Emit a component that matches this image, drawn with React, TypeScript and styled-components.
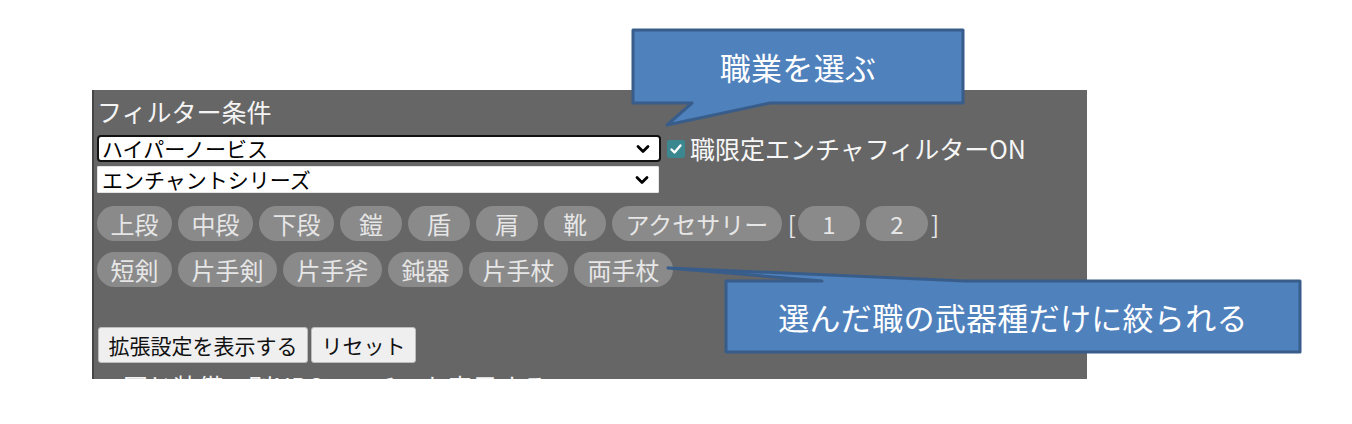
import styled, { createGlobalStyle } from "styled-components";

const GlobalStyle = createGlobalStyle`
  html, body {
    margin: 0;
    padding: 0;
    background: #fff;
  }
  body {
    font-family: "Noto Sans CJK JP", "Noto Sans", sans-serif;
  }
`;

const Page = styled.div`
  position: relative;
  width: 1352px;
  height: 424px;
  box-sizing: border-box;
  padding: 90px 0 0 92px;
  overflow: hidden;
`;

const Panel = styled.section`
  width: 995px;
  height: 289px;
  box-sizing: border-box;
  background: #666666;
  border-left: 2px solid #464646;
  padding: 6px 0 0 3px;
  overflow: hidden;
  color: #f2f2f2;
`;

const Title = styled.h2`
  margin: 0;
  font-size: 25px;
  font-weight: 400;
  line-height: 30px;
  color: #f4f4f4;
`;

const SelectStack = styled.div`
  display: flex;
  flex-direction: column;
  gap: 4px;
  margin-top: 9px;
`;

const SelectRow = styled.div`
  display: flex;
  align-items: center;
`;

const SelectBox = styled.div<{ $focused?: boolean }>`
  box-sizing: border-box;
  width: ${p => (p.$focused ? "564px" : "562px")};
  height: 27px;
  display: flex;
  align-items: center;
  justify-content: space-between;
  padding: 0 9px 0 ${p => (p.$focused ? "3px" : "4px")};
  background: #fff;
  border: ${p => (p.$focused ? "2px solid #111" : "1px solid #e4e4e4")};
  border-radius: ${p => (p.$focused ? "4px" : "1px")};
  font-size: 21px;
  line-height: 1;
  color: #000;
`;

const Chevron = () => (
  <svg width="14" height="10" viewBox="0 0 14 10">
    <path d="M2 2.5 L7 7.5 L12 2.5" fill="none" stroke="#000" strokeWidth="2.8" strokeLinecap="round" strokeLinejoin="round" />
  </svg>
);

const CheckBox = styled.span<{ $checked?: boolean }>`
  box-sizing: border-box;
  width: 18px;
  height: 18px;
  flex: none;
  display: inline-flex;
  align-items: center;
  justify-content: center;
  border-radius: 2px;
  background: ${p => (p.$checked ? "#3a8790" : "#fff")};
  border: ${p => (p.$checked ? "none" : "1px solid #767676")};
`;

const CheckMark = () => (
  <svg width="14" height="14" viewBox="0 0 14 14">
    <path d="M2.5 7.5 L5.5 10.5 L11.5 3.5" fill="none" stroke="#fff" strokeWidth="2.4" strokeLinecap="round" strokeLinejoin="round" />
  </svg>
);

const CheckLabel = styled.label`
  display: flex;
  align-items: center;
  gap: 5px;
  margin-left: 6px;
  font-size: 25px;
  line-height: 1;
  color: #f6f6f6;
`;

const PillRow = styled.div<{ $gapTop: number }>`
  display: flex;
  align-items: center;
  gap: 6px;
  margin-top: ${p => p.$gapTop}px;
`;

const Pill = styled.button`
  box-sizing: border-box;
  height: 35px;
  min-width: 62px;
  padding: 0 13.5px;
  display: inline-flex;
  align-items: center;
  justify-content: center;
  border: none;
  border-radius: 18px;
  background: #8a8a8a;
  color: #e6e6e6;
  font-family: inherit;
  font-size: 24px;
  line-height: 1;
`;

const Bracket = styled.span<{ $side: "open" | "close" }>`
  font-size: 24px;
  line-height: 1;
  color: #e8e8e8;
  margin-right: ${p => (p.$side === "open" ? "-4px" : "0")};
  margin-left: ${p => (p.$side === "close" ? "-3px" : "0")};
`;

const ButtonRow = styled.div`
  display: flex;
  gap: 3px;
  margin-top: 40px;
  padding-left: 1px;
`;

const ActionButton = styled.button`
  box-sizing: border-box;
  height: 36px;
  padding: 0 9.5px;
  background: #efefef;
  border: 1px solid #bdbdbd;
  border-radius: 3px;
  color: #111;
  font-family: inherit;
  font-size: 21px;
  line-height: 1;
`;

const OptionLine = styled.label`
  display: flex;
  align-items: flex-end;
  gap: 5px;
  margin-top: 8px;
  padding-left: 3px;
  font-size: 25px;
  line-height: 30px;
  color: #f4f4f4;
`;

const Callout = styled.div<{ $x: number; $y: number; $w: number; $h: number }>`
  position: absolute;
  left: ${p => p.$x}px;
  top: ${p => p.$y}px;
  width: ${p => p.$w}px;
  height: ${p => p.$h}px;
  display: flex;
  align-items: center;
  justify-content: center;
`;

const CalloutShape = styled.svg`
  position: absolute;
  left: 0;
  top: 0;
  overflow: visible;
`;

const CalloutText = styled.span`
  position: relative;
  font-size: 31px;
  line-height: 1;
  color: #fff;
  letter-spacing: 0.3px;
`;

const armorPills = ["上段", "中段", "下段", "鎧", "盾", "肩", "靴", "アクセサリー"];
const weaponPills = ["短剣", "片手剣", "片手斧", "鈍器", "片手杖", "両手杖"];

function App() {
  return (
    <>
      <GlobalStyle />
      <Page>
        <Panel>
          <Title>フィルター条件</Title>
          <SelectStack>
            <SelectRow>
              <SelectBox $focused>
                <span>ハイパーノービス</span>
                <Chevron />
              </SelectBox>
              <CheckLabel>
                <CheckBox $checked>
                  <CheckMark />
                </CheckBox>
                職限定エンチャフィルターON
              </CheckLabel>
            </SelectRow>
            <SelectBox>
              <span>エンチャントシリーズ</span>
              <Chevron />
            </SelectBox>
          </SelectStack>

          <PillRow $gapTop={13}>
            {armorPills.map(name => (
              <Pill key={name}>{name}</Pill>
            ))}
            <Bracket $side="open">[</Bracket>
            <Pill>1</Pill>
            <Pill>2</Pill>
            <Bracket $side="close">]</Bracket>
          </PillRow>
          <PillRow $gapTop={11}>
            {weaponPills.map(name => (
              <Pill key={name}>{name}</Pill>
            ))}
          </PillRow>

          <ButtonRow>
            <ActionButton>拡張設定を表示する</ActionButton>
            <ActionButton>リセット</ActionButton>
          </ButtonRow>

          <OptionLine>
            <CheckBox />
            同じ装備の別NPCエンチャも表示する
          </OptionLine>
        </Panel>

        <Callout $x={633} $y={30} $w={330} $h={73}>
          <CalloutShape width="330" height="73">
            <path
              d="M0 0 H330 V73 H137 L34 95 L59 73 H0 Z"
              fill="#4f81bd"
              stroke="#385d8a"
              strokeWidth="3"
              strokeLinejoin="round"
            />
          </CalloutShape>
          <CalloutText>職業を選ぶ</CalloutText>
        </Callout>

        <Callout $x={726} $y={281} $w={574} $h={71}>
          <CalloutShape width="574" height="71">
            <path
              d="M0 0 H96 L-58 -13 L239 0 H574 V71 H0 Z"
              fill="#4f81bd"
              stroke="#385d8a"
              strokeWidth="3"
              strokeLinejoin="round"
            />
          </CalloutShape>
          <CalloutText>選んだ職の武器種だけに絞られる</CalloutText>
        </Callout>
      </Page>
    </>
  );
}

export default App;
